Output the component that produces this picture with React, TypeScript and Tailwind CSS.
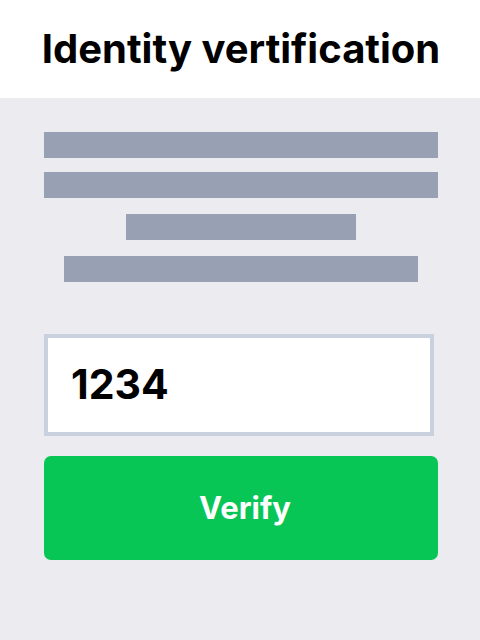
export default function App() {
  return (
    <div className="flex h-[640px] w-[480px] flex-col bg-[#ebebf0] font-['Inter',sans-serif]">
      <header className="flex h-[98px] items-center justify-center bg-white pl-[2px]">
        <h1 className="text-[40px] font-bold text-black">Identity vertification</h1>
      </header>

      <main className="flex flex-col pl-[44px] pt-[34px]">
        <div className="flex w-[394px] flex-col items-center gap-[14px]">
          <div className="h-[26px] w-[394px] bg-[#98a1b3]"></div>
          <div className="h-[26px] w-[394px] bg-[#98a1b3]"></div>
          <div className="mt-[2px] h-[26px] w-[230px] bg-[#98a1b3]"></div>
          <div className="mt-[2px] h-[26px] w-[354px] bg-[#98a1b3]"></div>
        </div>

        <div className="mt-[52px] flex h-[102px] w-[390px] items-center border-[4px] border-[#c9d1de] bg-white px-[23px]">
          <span className="text-[41px] font-bold text-black">1234</span>
        </div>

        <button
          type="button"
          className="mt-[20px] flex h-[104px] w-[394px] items-center justify-center rounded-[7px] bg-[#08c656] pl-[8px] text-[31px] font-bold text-white"
        >
          Verify
        </button>
      </main>
    </div>
  )
}
